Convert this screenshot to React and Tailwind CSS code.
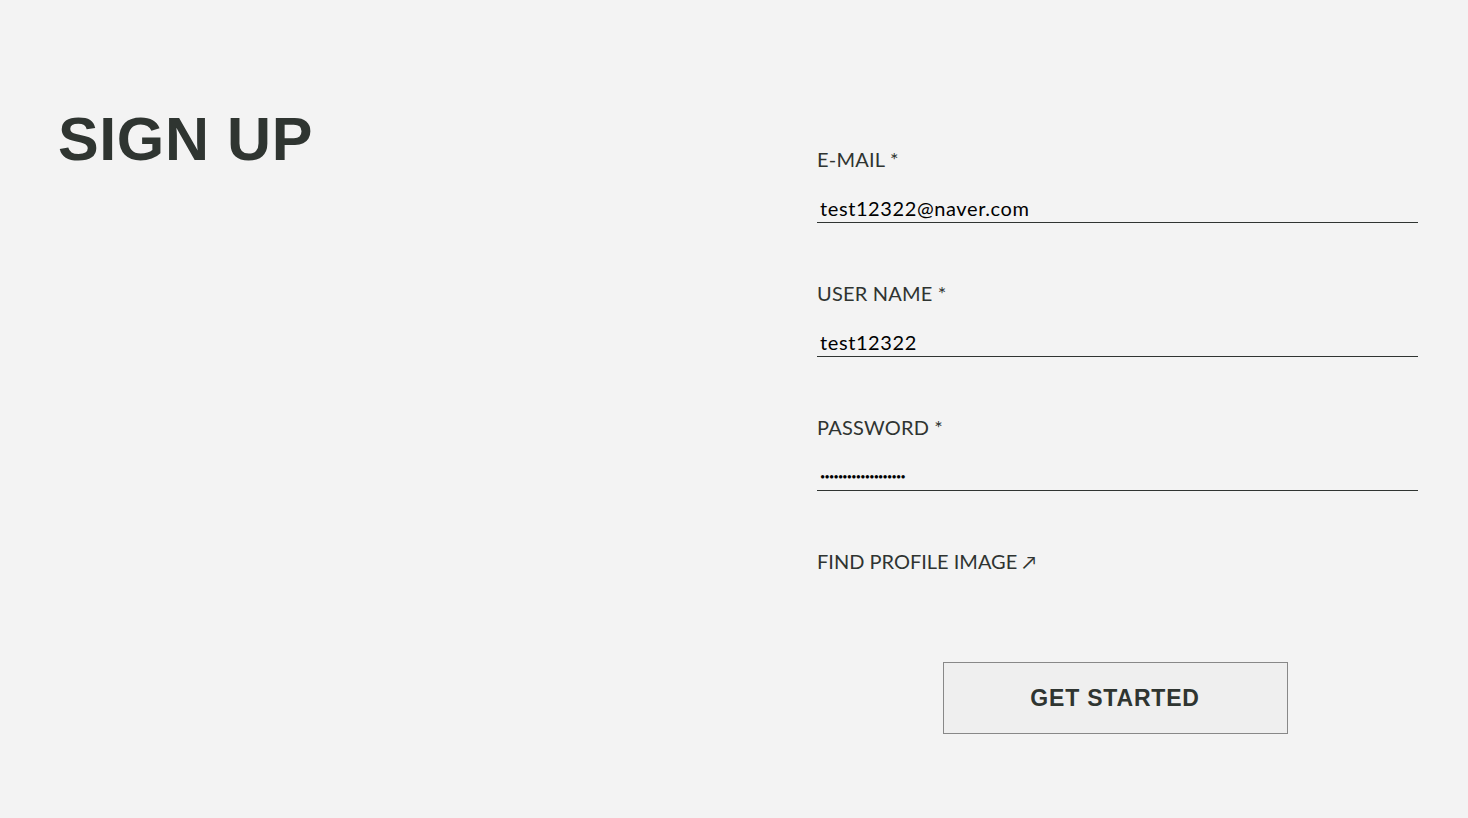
import React from "react";

function Field({ label, children }) {
  return (
    <div className="flex flex-col">
      <div className="text-[20px] leading-[24px] text-[#2f3431] font-['Lato',sans-serif] tracking-[0.2px]">{label}</div>
      <div className="mt-[22px] h-[30px] border-b border-[#2f3431] px-[3px] flex items-end pb-[2px] text-[20px] leading-[24px] text-black font-['Lato',sans-serif] tracking-[0.6px]">
        {children}
      </div>
    </div>
  );
}

export default function App() {
  return (
    <div className="min-h-[818px] bg-[#f3f3f3] flex pl-[58px] pr-[50px]">
      <div className="flex-1 pt-[109px]">
        <h1 className="text-[61px] leading-[61px] font-bold text-[#2f3531] font-['Liberation_Sans',Arial,sans-serif] tracking-[0.6px]">SIGN UP</h1>
      </div>
      <div className="w-[601px] pt-[147px] flex flex-col gap-[58px]">
        <Field label="E-MAIL *">test12322@naver.com</Field>
        <Field label="USER NAME *">test12322</Field>
        <Field label="PASSWORD *">
          <span className="text-[9px] leading-[14px] tracking-[-0.75px] pb-[4px]">{"•".repeat(19)}</span>
        </Field>
        <div className="text-[20px] leading-[24px] text-[#2f3431] font-['Lato',sans-serif]">FIND PROFILE IMAGE <span className="text-[18px]">↗</span></div>
        <div className="flex justify-center mt-[30px] pr-[5px]">
          <button className="w-[345px] h-[72px] border border-[#888888] bg-[#efefef] text-[23px] font-bold text-[#2f3531] font-['Liberation_Sans',Arial,sans-serif] tracking-[0.8px]">GET STARTED</button>
        </div>
      </div>
    </div>
  );
}
